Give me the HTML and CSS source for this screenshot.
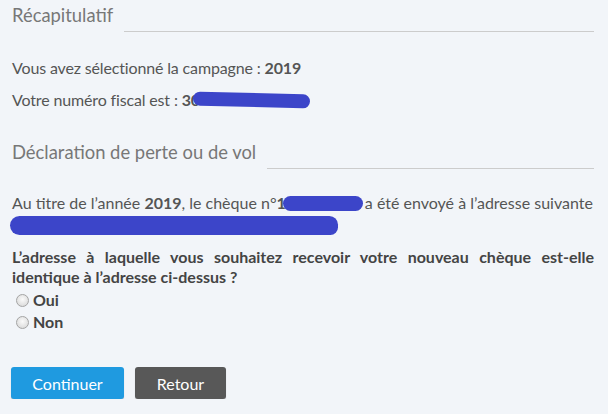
FILE: index.html
```html
<!DOCTYPE html>
<html lang="fr">
<head>
  <meta charset="UTF-8" />
  <title>Déclaration de perte ou de vol</title>
  <link rel="stylesheet" href="styles.css">
</head>
<body>
  <div class="page">

    <div class="section-title"><span>Récapitulatif</span></div>

    <div class="recap">
      <p>Vous avez sélectionné la campagne : <b>2019</b></p>
      <p>Votre numéro fiscal est : <b>30</b><span class="scribble scribble-fiscal"></span></p>
    </div>

    <div class="section-title second"><span>Déclaration de perte ou de vol</span></div>

    <p class="cheque">Au titre de l’année <b>2019</b>, le chèque n°<b>1</b><span class="scribble scribble-cheque"></span>a été envoyé à l’adresse suivante</p>
    <div class="scribble scribble-address"></div>

    <form id="addressForm">
      <p class="question">L’adresse à laquelle vous souhaitez recevoir votre nouveau chèque est-elle identique à l’adresse ci-dessus ?</p>
      <label class="choice"><input type="radio" name="same" value="oui" /> Oui</label>
      <label class="choice"><input type="radio" name="same" value="non" /> Non</label>

      <div class="actions">
        <button type="submit" class="btn btn-primary">Continuer</button>
        <button type="button" class="btn btn-back">Retour</button>
      </div>
    </form>

  </div>
</body>
</html>
```

FILE: styles.css
```css
body {
  margin: 0;
  background: #f2f5f9;
  font-family: Lato, "Open Sans", sans-serif;
  color: #555;
}
.page {
  padding: 0 14px 0 12px;
}
.section-title {
  display: flex;
  gap: 11px;
  padding-top: 3px;
  font-size: 18.4px;
  line-height: 24px;
  color: #777;
}
.section-title span {
  padding-bottom: 5px;
}
.section-title::after {
  content: "";
  flex: 1;
  border-bottom: 1px solid #ccc;
}
.section-title.second {
  margin-top: 21px;
}
p {
  margin: 0;
}
.recap {
  margin-top: 20px;
}
.recap p {
  font-size: 16px;
  line-height: 32px;
  letter-spacing: -0.15px;
}
.cheque {
  margin-top: 18px;
  font-size: 16px;
  line-height: 32px;
}
.scribble {
  background: #3c45c9;
  border-radius: 9px;
}
.scribble-fiscal {
  display: inline-block;
  width: 117px;
  height: 14px;
  margin-left: -7px;
  vertical-align: -1px;
  transform: rotate(1.5deg);
}
.scribble-cheque {
  display: inline-block;
  width: 80px;
  height: 15px;
  margin-left: -3px;
  margin-right: 2px;
  vertical-align: -2px;
}
.scribble-address {
  width: 328px;
  height: 19px;
  margin-left: -2px;
  margin-top: -3px;
  border-radius: 10px 9px 8px 10px;
}
.question {
  margin-top: 12px;
  font-size: 16px;
  line-height: 20px;
  font-weight: bold;
  color: #444;
  text-align: justify;
}
.choice {
  display: block;
  margin-top: 2px;
  font-size: 16px;
  line-height: 22px;
  font-weight: bold;
  color: #444;
}
.choice + .choice {
  margin-top: 0;
}
.choice input {
  appearance: none;
  width: 13px;
  height: 13px;
  margin: 0 0 0 4px;
  vertical-align: -1px;
  border: 1px solid #a4a4a4;
  border-radius: 50%;
  background: radial-gradient(circle at 50% 40%, #fafafa, #d4d4d4);
}
.actions {
  display: flex;
  gap: 11px;
  margin-top: 34px;
  margin-left: -1px;
}
.btn {
  height: 32px;
  border: none;
  border-radius: 3px;
  color: #fff;
  font-family: Lato, sans-serif;
  font-size: 16px;
  box-shadow: 0 1px 1px rgba(0,0,0,0.2);
  cursor: pointer;
}
.btn-primary {
  width: 113px;
  background: #1f9ae0;
}
.btn-back {
  width: 91px;
  background: #585858;
}
```
